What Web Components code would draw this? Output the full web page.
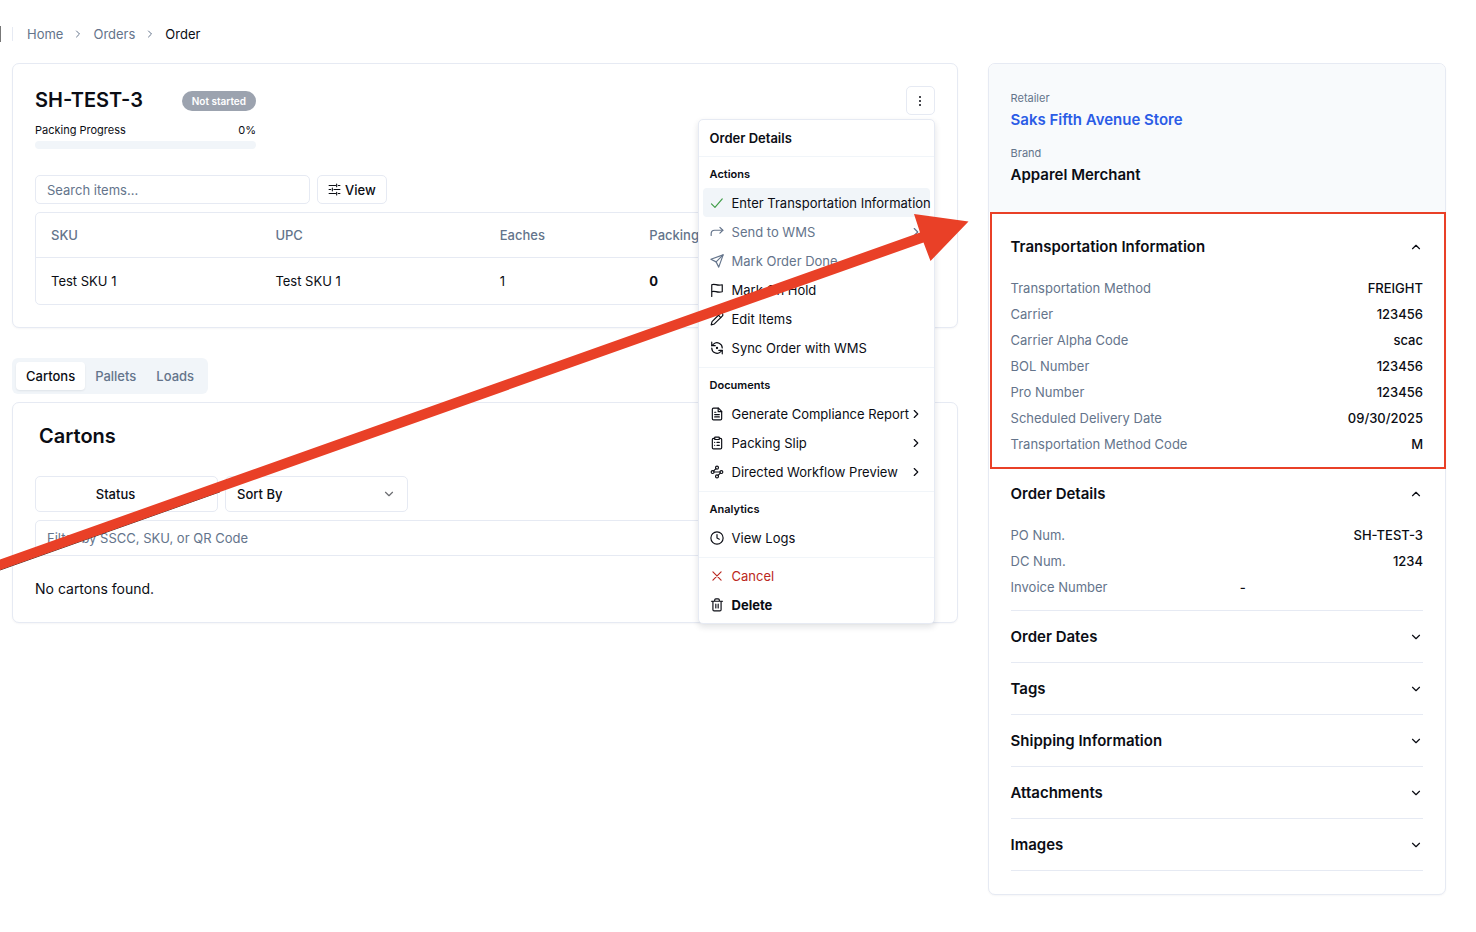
<!DOCTYPE html>
<html lang="en">
<head>
<meta charset="utf-8">
<meta name="viewport" content="width=device-width, initial-scale=1">
<title>Order SH-TEST-3</title>
<style>
  :root {
    --fg: #0b0d14;
    --muted: #64748b;
    --line: #e6eaf3;
    --soft: #f1f5f9;
    --red: #e94027;
  }
  body {
    margin: 0;
    background: #fff;
    color: var(--fg);
    font: 400 13px/18px Inter, "Liberation Sans", sans-serif;
  }
</style>
</head>
<body>
<order-page></order-page>

<script>
const ICONS = {
  right: '<path d="m9 18 6-6-6-6"/>',
  down: '<path d="m6 9 6 6 6-6"/>',
  up: '<path d="m6 15 6-6 6 6"/>',
  check: '<path d="M2.5 13.5 8.5 19.5 21 5"/>',
  forward: '<path d="m17 4 5 5-5 5"/><path d="M2 18v-3a6 6 0 0 1 6-6h14"/>',
  send: '<path d="M22.5 1.5 15 22.5l-4.5-9-9-4.500z"/><path d="M22.500 1.500 10.500 13.500"/>',
  flag: '<path d="M3 23V3c5-3 9 3 18 0v12c-9 3-13-3-18 0"/>',
  pencil: '<path d="M17 3a2.850 2.830 0 1 1 4 4L7.500 20.500 2 22l1.500-5.500Z"/><path d="m14.500 5.500 4 4"/>',
  sync: '<path d="M3 2v6h6"/><path d="M21 12A9 9 0 0 0 6 5.300L3 8"/><path d="M21 22v-6h-6"/><path d="M3 12a9 9 0 0 0 15 6.700l3-2.700"/><circle cx="12" cy="12" r="1"/>',
  file: '<path d="M14.500 2H6a2 2 0 0 0-2 2v16a2 2 0 0 0 2 2h12a2 2 0 0 0 2-2V7.500z"/><path d="M14 2v6h6M16 13H8M16 17H8M10 9H8"/>',
  clipboard: '<rect x="8" y="2" width="8" height="4" rx="1"/><path d="M16 4h2a2 2 0 0 1 2 2v14a2 2 0 0 1-2 2H6a2 2 0 0 1-2-2V6a2 2 0 0 1 2-2h2M12 11h4M12 16h4M8 11h.01M8 16h.01"/>',
  waypoints: '<circle cx="12" cy="4.500" r="2.500"/><path d="m10.200 6.300-3.900 3.900"/><circle cx="4.500" cy="12" r="2.500"/><path d="M7 12h10"/><circle cx="19.500" cy="12" r="2.500"/><path d="m13.800 17.700 3.900-3.900"/><circle cx="12" cy="19.500" r="2.500"/>',
  clock: '<circle cx="12" cy="12" r="10.500"/><path d="M12 6v6l4 2"/>',
  cross: '<path d="M5 5 19 19M19 5 5 19"/>',
  trash: '<path d="M2.500 5.500h19M19 5.500V20a2 2 0 0 1-2 2H7a2 2 0 0 1-2-2V5.500M8 5V3.500a2 2 0 0 1 2-2h4a2 2 0 0 1 2 2V5M10 10.500v6.500M14 10.500v6.500"/>',
  sliders: '<path d="M2 4.500h12M19 4.500h3M2 12h3M11 12h11M2 19.500h12M19 19.500h3"/><path d="M16 2v5M8 9.500v5M16 17v5"/>',
  dots: '<g fill="currentColor" stroke="none"><circle cx="12" cy="4" r="2"/><circle cx="12" cy="12" r="2"/><circle cx="12" cy="20" r="2"/></g>'
};

function define(name, html, setup) {
  const template = document.createElement('template');
  template.innerHTML = html;
  customElements.define(name, class extends HTMLElement {
    connectedCallback() {
      if (this.shadowRoot) return;
      this.attachShadow({ mode: 'open' }).append(template.content.cloneNode(true));
      if (setup) setup(this, this.shadowRoot);
    }
  });
}

define('ui-icon', `
<style>
  :host { display: inline-flex; flex: none; width: 14px; height: 14px; }
  svg { width: 100%; height: 100%; fill: none; stroke: currentColor; stroke-width: 2; stroke-linecap: round; stroke-linejoin: round; }
</style>
<svg viewBox="0 0 24 24" aria-hidden="true"></svg>`, (host, root) => {
  root.querySelector('svg').innerHTML = ICONS[host.getAttribute('name')];
});

define('ui-card', `
<style>
  :host { display: block; box-sizing: border-box; border: 1px solid var(--line); border-radius: 7px; background: #fff; box-shadow: 0 1px 2px rgb(15 23 42 / 4%); }
</style>
<slot></slot>`);

define('menu-item', `
<style>
  :host { display: block; }
  button { display: flex; align-items: center; width: 100%; height: 29px; padding: 0 7px; border: 0; border-radius: 4px; background: none; color: inherit; font: inherit; text-align: left; white-space: nowrap; }
  :host([active]) button { background: var(--soft); }
  :host([active]) ui-icon:first-child { color: #3f9c46; }
  :host([disabled]) button { color: var(--muted); }
  :host([danger]) button { color: #bb2821; }
  :host([strong]) button { font-weight: 700; }
  span { flex: 1; min-width: 0; margin-left: 8px; }
</style>
<button type="button" role="menuitem"><span><slot></slot></span></button>`, (host, root) => {
  const button = root.querySelector('button');
  button.disabled = host.hasAttribute('disabled');
  button.insertAdjacentHTML('afterbegin', `<ui-icon name="${host.getAttribute('icon')}"></ui-icon>`);
  if (host.hasAttribute('submenu')) button.insertAdjacentHTML('beforeend', '<ui-icon name="right"></ui-icon>');
});

define('menu-group', `
<style>
  :host { display: block; padding: 4px 4px 5px; border-top: 1px solid var(--soft); }
  :host(:not([label])) { padding: 3px 4px 4px; }
  h3 { margin: 0; padding: 0 7px; font-size: 11px; line-height: 27px; font-weight: 600; }
</style>
<slot></slot>`, (host, root) => {
  if (!host.hasAttribute('label')) return;
  const h = document.createElement('h3');
  h.textContent = host.getAttribute('label');
  root.querySelector('slot').before(h);
});

define('order-actions', `
<style>
  :host { display: block; position: relative; }
  .trigger { display: flex; align-items: center; justify-content: center; width: 29px; height: 29px; padding: 0; border: 1px solid var(--line); border-radius: 5px; background: #fff; color: var(--fg); }
  .trigger ui-icon { width: 12px; height: 12px; }
  .menu { position: absolute; z-index: 10; top: 33px; right: 0; box-sizing: border-box; width: 237px; border: 1px solid var(--line); border-radius: 5px; background: #fff; box-shadow: 0 3px 6px rgb(15 23 42 / 12%); }
  h2 { margin: 0; padding: 0 11px; font-size: 13px; line-height: 36px; font-weight: 600; }
</style>
<button class="trigger" type="button" aria-label="Order actions" aria-expanded="true"><ui-icon name="dots"></ui-icon></button>
<div class="menu" role="menu">
  <h2>Order Details</h2>
  <menu-group label="Actions">
    <menu-item icon="check" active>Enter Transportation Information</menu-item>
    <menu-item icon="forward" disabled submenu>Send to WMS</menu-item>
    <menu-item icon="send" disabled>Mark Order Done</menu-item>
    <menu-item icon="flag">Mark On Hold</menu-item>
    <menu-item icon="pencil">Edit Items</menu-item>
    <menu-item icon="sync">Sync Order with WMS</menu-item>
  </menu-group>
  <menu-group label="Documents">
    <menu-item icon="file" submenu>Generate Compliance Report</menu-item>
    <menu-item icon="clipboard" submenu>Packing Slip</menu-item>
    <menu-item icon="waypoints" submenu>Directed Workflow Preview</menu-item>
  </menu-group>
  <menu-group label="Analytics">
    <menu-item icon="clock">View Logs</menu-item>
  </menu-group>
  <menu-group>
    <menu-item icon="cross" danger>Cancel</menu-item>
    <menu-item icon="trash" strong>Delete</menu-item>
  </menu-group>
</div>`);

define('page-breadcrumb', `
<style>
  :host { display: flex; align-items: center; height: 16px; padding: 26px 0 21px; color: var(--muted); }
  .edge { width: 1px; height: 16px; background: #777; }
  .rule { width: 1px; height: 14px; margin: 0 14px 0 11px; background: var(--line); }
  nav { display: flex; align-items: center; gap: 9px; }
  a { color: inherit; text-decoration: none; }
  a[aria-current] { color: var(--fg); }
  ui-icon { width: 12px; height: 12px; }
</style>
<span class="edge"></span><span class="rule"></span>
<nav aria-label="Breadcrumb">
  <a href="#home">Home</a><ui-icon name="right"></ui-icon>
  <a href="#orders">Orders</a><ui-icon name="right"></ui-icon>
  <a href="#order" aria-current="page">Order</a>
</nav>`);

define('order-summary', `
<style>
  :host { display: block; }
  .body { padding: 22px; }
  .head { display: flex; justify-content: space-between; align-items: flex-start; }
  .progress { width: 221px; }
  .title { display: flex; align-items: center; justify-content: space-between; height: 29px; }
  h1 { margin: 0; font-size: 20px; line-height: 29px; font-weight: 600; }
  .badge { padding: 0 10px; border-radius: 10px; background: #9ca3af; color: #fff; font-size: 10px; line-height: 20px; font-weight: 600; }
  .labels { display: flex; justify-content: space-between; margin-top: 7px; font-size: 11px; line-height: 16px; }
  .bar { height: 8px; margin-top: 3px; border-radius: 4px; background: var(--soft); }
  .tools { display: flex; gap: 7px; margin: 26px 0 8px; }
  input, .view { box-sizing: border-box; height: 29px; border: 1px solid var(--line); border-radius: 5px; background: #fff; color: var(--fg); font: inherit; }
  input { width: 275px; padding: 0 11px; }
  input::placeholder { color: var(--muted); opacity: 1; }
  .view { display: flex; align-items: center; gap: 4px; padding: 0 10px; font-weight: 500; }
  .view ui-icon { width: 13px; height: 13px; }
  .frame { border: 1px solid var(--line); border-radius: 5px; }
  table { width: 100%; table-layout: fixed; border-collapse: collapse; }
  th, td { box-sizing: border-box; padding: 0 15px; text-align: left; }
  th { height: 44px; color: var(--muted); font-weight: 500; border-bottom: 1px solid var(--line); }
  td { height: 47px; }
  .w4 { width: 25%; } .w6 { width: 16.67%; }
  b { font-weight: 700; }
</style>
<ui-card><div class="body">
  <div class="head">
    <div class="progress">
      <div class="title"><h1>SH-TEST-3</h1><span class="badge">Not started</span></div>
      <div class="labels"><span>Packing Progress</span><span>0%</span></div>
      <div class="bar" role="progressbar" aria-label="Packing Progress" aria-valuenow="0"></div>
    </div>
    <order-actions></order-actions>
  </div>
  <div class="tools">
    <input type="text" aria-label="Search items" placeholder="Search items...">
    <button class="view" type="button"><ui-icon name="sliders"></ui-icon>View</button>
  </div>
  <div class="frame"><table>
    <thead><tr><th class="w4">SKU</th><th class="w4">UPC</th><th class="w6">Eaches</th><th>Packing</th></tr></thead>
    <tbody><tr><td>Test SKU 1</td><td>Test SKU 1</td><td>1</td><td><b>0</b></td></tr></tbody>
  </table></div>
</div></ui-card>`);

define('carton-panel', `
<style>
  :host { display: block; }
  .tabs { display: inline-flex; box-sizing: border-box; height: 36px; padding: 4px; border-radius: 6px; background: var(--soft); }
  .tabs button { padding: 0 10px; border: 0; border-radius: 4px; background: none; color: var(--muted); font: inherit; font-weight: 500; }
  .tabs [aria-selected=true] { background: #fff; color: var(--fg); box-shadow: 0 1px 2px rgb(15 23 42 / 8%); }
  ui-card { margin-top: 8px; }
  .body { padding: 19px 22px 22px; }
  h2 { margin: 0 4px 25px; font-size: 20px; line-height: 29px; font-weight: 600; }
  .filters { display: flex; gap: 7px; margin-bottom: 8px; }
  .status, select, input { box-sizing: border-box; height: 36px; border: 1px solid var(--line); border-radius: 5px; background: #fff; color: var(--fg); font: inherit; }
  .status, .sort { width: 183px; }
  .status { padding: 0 22px 0 0; font-weight: 500; }
  .sort { display: grid; align-items: center; }
  .sort > * { grid-area: 1 / 1; }
  select { width: 100%; padding: 0 11px; appearance: none; font-weight: 500; }
  .sort ui-icon { justify-self: end; margin-right: 12px; opacity: .6; pointer-events: none; }
  input { display: block; width: 100%; padding: 0 11px; }
  input::placeholder { color: var(--muted); opacity: 1; }
  p { margin: 22px 0 0; font-size: 14px; line-height: 22px; }
</style>
<div class="tabs" role="tablist">
  <button type="button" role="tab" aria-selected="true">Cartons</button>
  <button type="button" role="tab" aria-selected="false">Pallets</button>
  <button type="button" role="tab" aria-selected="false">Loads</button>
</div>
<ui-card><div class="body">
  <h2>Cartons</h2>
  <div class="filters">
    <button class="status" type="button">Status</button>
    <div class="sort"><select aria-label="Sort By"><option>Sort By</option></select><ui-icon name="down"></ui-icon></div>
  </div>
  <input type="text" aria-label="Filter cartons" placeholder="Filter by SSCC, SKU, or QR Code">
  <p>No cartons found.</p>
</div></ui-card>`);

define('detail-row', `
<style>
  :host { display: grid; grid-template-columns: 5fr 4fr; }
  .label { color: var(--muted); }
  .value { font-weight: 500; text-align: right; }
  :host([empty]) .value { text-align: left; }
</style>
<span class="label"></span><span class="value"><slot></slot></span>`, (host, root) => {
  root.querySelector('.label').textContent = host.getAttribute('label');
});

define('detail-section', `
<style>
  :host { display: block; position: relative; margin: 0 22px; border-bottom: 1px solid var(--line); }
  :host([marked]) { padding-top: 9px; }
  /* annotation frame drawn over the card edges */
  :host([marked])::after { content: ""; position: absolute; inset: 0 -23px -2px -21px; border: 2px solid var(--red); pointer-events: none; }
  h2 { margin: 0; }
  button { display: flex; align-items: center; justify-content: space-between; width: 100%; height: 51px; padding: 0; border: 0; background: none; color: inherit; font: inherit; font-size: 15px; font-weight: 600; text-align: left; }
  .rows { display: none; gap: 8px; padding: 7px 0 14px; }
  :host([open]) .rows { display: grid; }
</style>
<h2><button type="button"><span></span><ui-icon></ui-icon></button></h2>
<div class="rows"><slot></slot></div>`, (host, root) => {
  const open = host.hasAttribute('open');
  root.querySelector('span').textContent = host.getAttribute('label');
  root.querySelector('button').setAttribute('aria-expanded', open);
  root.querySelector('ui-icon').outerHTML = `<ui-icon name="${open ? 'up' : 'down'}"></ui-icon>`;
});

define('order-sidebar', `
<style>
  :host { display: block; }
  .parties { padding: 26px 22px 25px; border-radius: 6px 6px 0 0; background: #f8fafc; }
  .parties div + div { margin-top: 13px; }
  small { display: block; color: var(--muted); font-size: 11px; line-height: 16px; }
  strong { display: block; font-size: 15px; line-height: 24px; margin-top: 2px; font-weight: 600; }
  a { color: #2b5ce6; text-decoration: none; }
  .sections { padding-bottom: 23px; }
</style>
<ui-card>
  <div class="parties">
    <div><small>Retailer</small><strong><a href="#retailer">Saks Fifth Avenue Store</a></strong></div>
    <div><small>Brand</small><strong>Apparel Merchant</strong></div>
  </div>
  <div class="sections">
    <detail-section label="Transportation Information" open marked>
      <detail-row label="Transportation Method">FREIGHT</detail-row>
      <detail-row label="Carrier">123456</detail-row>
      <detail-row label="Carrier Alpha Code">scac</detail-row>
      <detail-row label="BOL Number">123456</detail-row>
      <detail-row label="Pro Number">123456</detail-row>
      <detail-row label="Scheduled Delivery Date">09/30/2025</detail-row>
      <detail-row label="Transportation Method Code">M</detail-row>
    </detail-section>
    <detail-section label="Order Details" open>
      <detail-row label="PO Num.">SH-TEST-3</detail-row>
      <detail-row label="DC Num.">1234</detail-row>
      <detail-row label="Invoice Number" empty>-</detail-row>
    </detail-section>
    <detail-section label="Order Dates"></detail-section>
    <detail-section label="Tags"></detail-section>
    <detail-section label="Shipping Information"></detail-section>
    <detail-section label="Attachments"></detail-section>
    <detail-section label="Images"></detail-section>
  </div>
</ui-card>`);

define('callout-arrow', `
<style>
  :host { position: absolute; z-index: 20; top: 0; left: 0; pointer-events: none; }
  svg { display: block; fill: var(--red); }
</style>
<svg width="970" height="580" viewBox="0 0 970 580" aria-hidden="true">
  <path d="M0 570 220 491.800" stroke="#4a2a24"/>
  <path d="M0 559.500 920 232.500 914 214 968.500 221.500 930.500 261 923.500 242.500 0 570Z"/>
</svg>`);

define('order-page', `
<style>
  :host { display: block; position: relative; }
  main { display: grid; grid-template-columns: minmax(0, 33fr) minmax(0, 16fr); gap: 30px; align-items: start; padding: 0 30px 38px 12px; }
  .left { display: grid; gap: 30px; }
</style>
<page-breadcrumb></page-breadcrumb>
<main>
  <div class="left"><order-summary></order-summary><carton-panel></carton-panel></div>
  <order-sidebar></order-sidebar>
</main>
<callout-arrow></callout-arrow>`);
</script>
</body>
</html>
